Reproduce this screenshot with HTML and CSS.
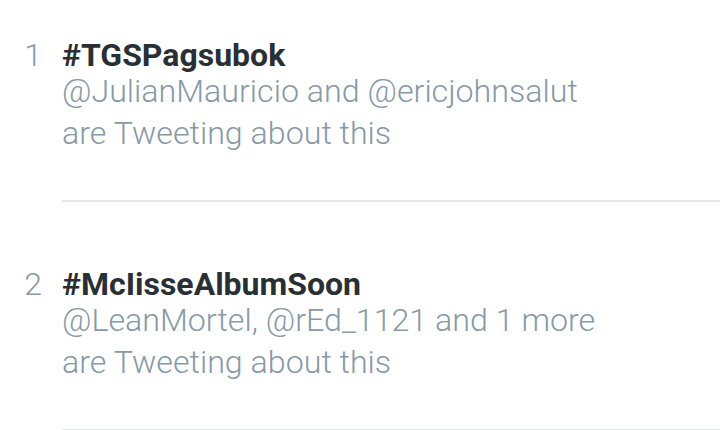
FILE: index.html
```
<!DOCTYPE html>
<html lang="en">
<head>
    <meta charset="UTF-8">
    <title>Trends</title>
    <link rel="stylesheet" href="styles.css">
</head>
<body>

<ul class="trends">
    <li class="trend">
        <span class="rank">1</span>
        <div class="trend-body">
            <div class="tag">#TGSPagsubok</div>
            <div class="meta">@JulianMauricio and @ericjohnsalut</div>
            <div class="meta">are Tweeting about this</div>
        </div>
    </li>
    <li class="trend">
        <span class="rank">2</span>
        <div class="trend-body">
            <div class="tag">#McIisseAlbumSoon</div>
            <div class="meta">@LeanMortel, @rEd_1121 and 1 more</div>
            <div class="meta">are Tweeting about this</div>
        </div>
    </li>
</ul>

</body>
</html>
```

FILE: styles.css
```
body {
    font-family: 'Roboto', 'Liberation Sans', sans-serif;
    background-color: #fff;
    margin: 0;
    padding: 0;
}
.trends {
    list-style: none;
    margin: 0;
    padding: 41px 0 0 0;
}
.trend {
    display: flex;
    padding-left: 20px;
}
.trend + .trend {
    margin-top: 68px;
}
.rank {
    width: 22px;
    margin-right: 20px;
    text-align: right;
    font-size: 32px;
    font-weight: 300;
    line-height: 29px;
    color: #8899a6;
}
.trend-body {
    flex: 1;
    padding-bottom: 46px;
    border-bottom: 2px solid #e1e8ed;
}
.tag {
    font-size: 32px;
    font-weight: 700;
    line-height: 29px;
    color: #292f33;
}
.meta {
    font-size: 32.2px;
    font-weight: 300;
    line-height: 42px;
    color: #8899a6;
}
```
